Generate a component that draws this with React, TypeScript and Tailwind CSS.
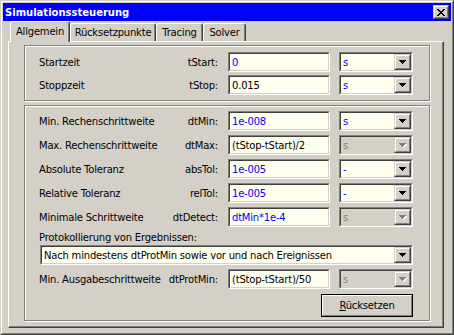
import React from "react";

type Param = {
  label: string;
  name: string;
  value: string;
  valueBlue: boolean;
  unit: string;
  unitOn: boolean;
};

const timeRows: Param[] = [
  { label: "Startzeit", name: "tStart:", value: "0", valueBlue: true, unit: "s", unitOn: true },
  { label: "Stoppzeit", name: "tStop:", value: "0.015", valueBlue: false, unit: "s", unitOn: true },
];

const stepRows: Param[] = [
  { label: "Min. Rechenschrittweite", name: "dtMin:", value: "1e-008", valueBlue: true, unit: "s", unitOn: true },
  { label: "Max. Rechenschrittweite", name: "dtMax:", value: "(tStop-tStart)/2", valueBlue: false, unit: "s", unitOn: false },
  { label: "Absolute Toleranz", name: "absTol:", value: "1e-005", valueBlue: true, unit: "-", unitOn: true },
  { label: "Relative Toleranz", name: "relTol:", value: "1e-005", valueBlue: true, unit: "-", unitOn: true },
  { label: "Minimale Schrittweite", name: "dtDetect:", value: "dtMin*1e-4", valueBlue: true, unit: "s", unitOn: false },
];

const protRow: Param = {
  label: "Min. Ausgabeschrittweite",
  name: "dtProtMin:",
  value: "(tStop-tStart)/50",
  valueBlue: false,
  unit: "s",
  unitOn: false,
};

function Sunken({ className, inner, children }: { className: string; inner: string; children: React.ReactNode }) {
  return (
    <div className={"border border-t-[#808080] border-l-[#808080] border-r-white border-b-white " + className}>
      <div className={"h-full border border-t-[#404040] border-l-[#404040] border-r-[#d4d0c8] border-b-[#d4d0c8] " + inner}>
        {children}
      </div>
    </div>
  );
}

function Raised({ className, children }: { className: string; children: React.ReactNode }) {
  return (
    <div className={"border border-t-[#d4d0c8] border-l-[#d4d0c8] border-r-[#404040] border-b-[#404040] bg-[#d4d0c8] " + className}>
      <div className="h-full border border-t-white border-l-white border-r-[#808080] border-b-[#808080] flex items-center justify-center">
        {children}
      </div>
    </div>
  );
}

function DownArrow({ enabled }: { enabled: boolean }) {
  const tri = (dx: number, dy: number, fill: string) => (
    <g fill={fill}>
      <rect x={0 + dx} y={0 + dy} width={7} height={1} />
      <rect x={1 + dx} y={1 + dy} width={5} height={1} />
      <rect x={2 + dx} y={2 + dy} width={3} height={1} />
      <rect x={3 + dx} y={3 + dy} width={1} height={1} />
    </g>
  );
  return (
    <svg width="8" height="5" viewBox="0 0 8 5" className="block" shapeRendering="crispEdges">
      {enabled ? tri(0, 0, "#000") : (
        <>
          {tri(1, 1, "#fff")}
          {tri(0, 0, "#808080")}
        </>
      )}
    </svg>
  );
}

function Combo({ value, blue, enabled, width }: { value: string; blue: boolean; enabled: boolean; width: string }) {
  const color = !enabled ? "text-[#808080]" : blue ? "text-[#0000ff]" : "text-black";
  return (
    <Sunken className={width + " h-[20px]"} inner={"flex " + (enabled ? "bg-[#ffffee]" : "bg-[#d4d0c8]")}>
      <span className={"flex-1 pl-[2px] flex items-center " + color}>{value}</span>
      <Raised className="w-[17px] h-full">
        <DownArrow enabled={enabled} />
      </Raised>
    </Sunken>
  );
}

function ParamRow({ p }: { p: Param }) {
  return (
    <div className="flex items-center h-[20px]">
      <div className="w-[179px] flex justify-between">
        <span>{p.label}</span>
        <span>{p.name}</span>
      </div>
      <Sunken className="ml-[10px] w-[102px] h-[20px]" inner="bg-[#ffffee] pl-[2px] flex items-center">
        <span className={p.valueBlue ? "text-[#0000ff]" : "text-black"}>{p.value}</span>
      </Sunken>
      <div className="ml-[9px]">
        <Combo value={p.unit} blue={true} enabled={p.unitOn} width="w-[74px]" />
      </div>
    </div>
  );
}

function GroupBox({ className, children }: { className: string; children: React.ReactNode }) {
  return (
    <div className={"w-[406px] border border-[#808080] shadow-[inset_1px_1px_0_#fff,1px_1px_0_#fff] pl-[14px] " + className}>
      {children}
    </div>
  );
}

function CloseGlyph() {
  const cells = [
    [0, 0, 2], [6, 0, 2],
    [1, 1, 2], [5, 1, 2],
    [2, 2, 4],
    [3, 3, 2],
    [2, 4, 4],
    [1, 5, 2], [5, 5, 2],
    [0, 6, 2], [6, 6, 2],
  ];
  return (
    <svg width="8" height="7" viewBox="0 0 8 7" className="block" shapeRendering="crispEdges">
      {cells.map(([x, y, w], i) => (
        <rect key={i} x={x} y={y} width={w} height={1} fill="#000" />
      ))}
    </svg>
  );
}

const tabs = [
  { name: "Rücksetzpunkte", w: "w-[86px]" },
  { name: "Tracing", w: "w-[47px]" },
  { name: "Solver", w: "w-[43px]" },
];

export default function App() {
  return (
    <div className="w-[454px] h-[335px] bg-[#d4d0c8] border border-t-[#d4d0c8] border-l-[#d4d0c8] border-r-[#404040] border-b-[#404040] font-['DejaVu_Sans',sans-serif] text-[10px] leading-[13px] tracking-[-0.2px] text-black select-none">
      <div className="h-full border border-t-white border-l-white border-r-[#808080] border-b-[#808080] p-px flex flex-col">
        {/* title bar */}
        <div className="h-[18px] bg-[#0000ff] flex items-center justify-between pl-[2px] pr-[2px]">
          <span className="text-white font-bold text-[10px] tracking-normal">Simulationssteuerung</span>
          <Raised className="w-[16px] h-[14px]">
            <CloseGlyph />
          </Raised>
        </div>

        {/* tabs */}
        <div className="h-[20px] flex items-end pl-[7px]">
          <div className="relative z-10 -mb-px h-[21px] w-[60px] bg-[#d4d0c8] border-l border-t border-r border-l-white border-t-white border-r-[#404040] rounded-t-[3px] shadow-[inset_-1px_0_0_#808080] flex items-center justify-center pb-[2px]">
            Allgemein
          </div>
          {tabs.map((t) => (
            <div
              key={t.name}
              className={"h-[18px] " + t.w + " border-l border-t border-r border-l-white border-t-white border-r-[#404040] rounded-t-[3px] shadow-[inset_-1px_0_0_#808080] flex items-center justify-center"}
            >
              {t.name}
            </div>
          ))}
        </div>

        {/* tab panel */}
        <div className="ml-[5px] w-[436px] h-[287px] border border-t-white border-l-white border-r-[#404040] border-b-[#404040] shadow-[inset_-1px_-1px_0_#808080] pl-[15px] pt-[3px]">
          <GroupBox className="h-[56px] pt-[6px] flex flex-col gap-[3px]">
            {timeRows.map((r) => (
              <ParamRow key={r.name} p={r} />
            ))}
          </GroupBox>

          <GroupBox className="mt-[4px] h-[216px] pt-[5px]">
            <div className="w-[374px] flex flex-col">
              <div className="flex flex-col gap-[4px]">
                {stepRows.map((r) => (
                  <ParamRow key={r.name} p={r} />
                ))}
              </div>
              <div className="mt-[4px] h-[13px]">Protokollierung von Ergebnissen:</div>
              <div className="mt-[1px] ml-[1px]">
                <Combo
                  value="Nach mindestens dtProtMin sowie vor und nach Ereignissen"
                  blue={false}
                  enabled={true}
                  width="w-[373px]"
                />
              </div>
              <div className="mt-[4px]">
                <ParamRow p={protRow} />
              </div>
              <div className="mt-[5px] self-end w-[92px] h-[23px] border border-black">
                <div className="h-full border border-t-white border-l-white border-r-[#808080] border-b-[#808080] flex items-center justify-center">
                  <span>
                    <span className="underline underline-offset-[1px]">R</span>ücksetzen
                  </span>
                </div>
              </div>
            </div>
          </GroupBox>
        </div>
      </div>
    </div>
  );
}
